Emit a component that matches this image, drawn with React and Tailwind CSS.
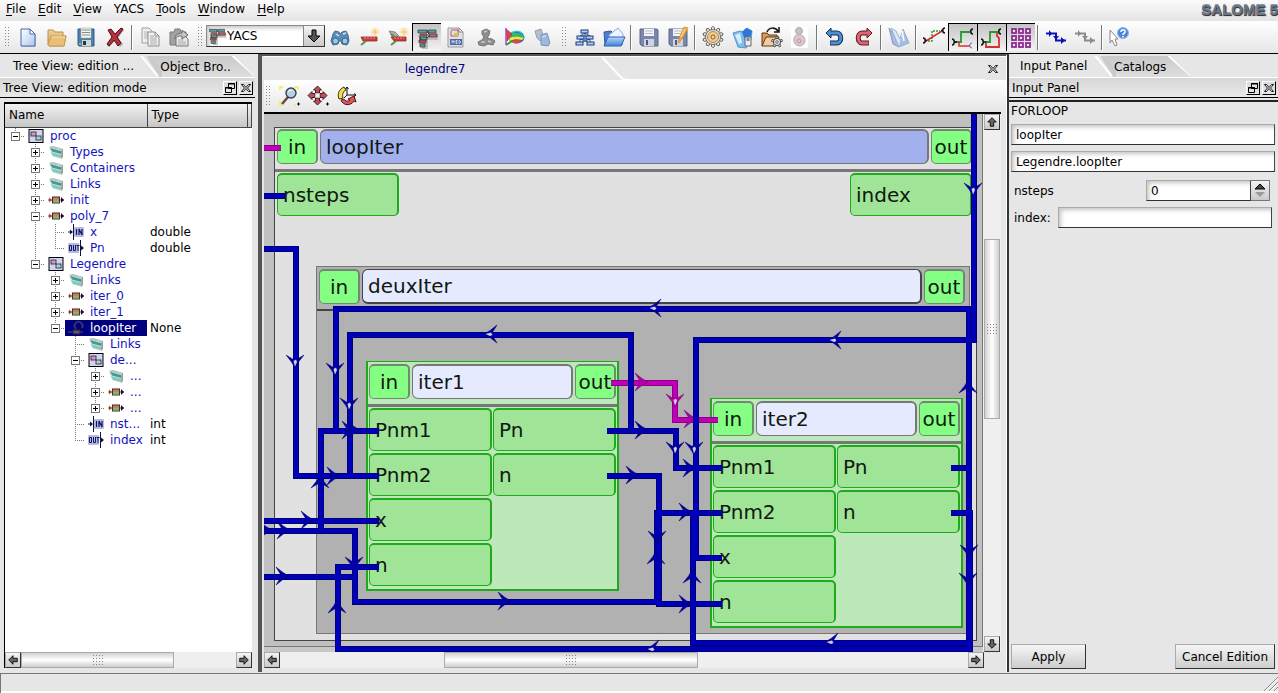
import React from "react";

/* ---------- toolbar icons ---------- */
function Ic({ children, size = "size-6" }) {
  return (
    <svg viewBox="0 0 24 24" className={`${size} shrink-0`} aria-hidden="true">
      {children}
    </svg>
  );
}

const IconNew = () => (
  <Ic>
    <path d="M6 5h9l5 5v12H6z" fill="#999" opacity=".5" />
    <path d="M5 4h9l5 5v12H5z" fill="url(#gPage)" stroke="#4a68a8" />
    <path d="M14 4v5h5z" fill="#fff" stroke="#4a68a8" />
  </Ic>
);
const IconFolder = () => (
  <Ic>
    <path d="M3 20V5h5l2 2h8v4h3l-2 10H4z" fill="url(#gFolder)" stroke="#b98d4a" />
    <path d="M3 20l3-9h15l-2 10H4z" fill="#e9bf78" stroke="#c79a55" />
    <path d="M7 12h13" stroke="#fbe3b4" />
  </Ic>
);
const IconSave = () => (
  <Ic>
    <path d="M4 4h16v17H5l-1-1z" fill="#4f7fae" stroke="#2f5a86" />
    <path d="M7 3h10v10H7z" fill="#f6f6ee" stroke="#9ab" strokeWidth=".6" />
    <path d="M8 5h8M8 7.500h8M8 10h8" stroke="#888" />
    <path d="M8 15h9v6H8z" fill="#cfd8d0" />
    <path d="M9 16h3v4H9z" fill="#1f3a30" />
    <path d="M5 18h2v2H5z" fill="#7ad14c" />
  </Ic>
);
const IconDelete = () => (
  <Ic>
    <path d="M6 7l2-2 5 5 6-7 2 2-6 8 5 6-3 3-5-6-6 6-2-2 6-7z" fill="#555" opacity=".5" />
    <path d="M5 5l3-1 4 5 6-6 2 1-6 8 4 6-3 3-4-6-5 6-2-2 5-7z" fill="#b3323d" stroke="#5a1018" />
  </Ic>
);
const IconCopy = () => (
  <Ic>
    <path d="M4 3h7l3 3v12H4z" fill="#eee" stroke="#a0a0a0" />
    <path d="M6 7h5M6 9h5M6 11h5M6 13h5" stroke="#b5b5b5" />
    <path d="M10 7h7l4 4v10H10z" fill="#f2f2f2" stroke="#8c8c8c" />
    <path d="M17 7v4h4" fill="none" stroke="#8c8c8c" />
    <path d="M12 11h4M12 13h7M12 15h7M12 17h7M12 19h7" stroke="#aaa" />
  </Ic>
);
const IconPaste = () => (
  <Ic>
    <path d="M3 7h4l1-3h5l1 3h5v13H3z" fill="#a2a2a2" stroke="#7c7c7c" />
    <path d="M9 10h8l4 4v7H9z" fill="#e8e8e8" stroke="#777" />
    <path d="M11 15h5M11 17h8M11 19h8" stroke="#aaa" />
    <path d="M8 14c0-4 3-6 7-6V5l6 5-6 4v-3c-3 0-5 0-7 3z" fill="#c4c4c4" stroke="#6c6c6c" />
  </Ic>
);
const IconYacs = ({ size }) => (
  <Ic size={size}>
    <path d="M7 9h6v14H7zM9 8h14v6H13z" fill="#b4b4b4" opacity=".8" />
    <g stroke="#4a3a3a" strokeWidth=".8">
      <path d="M3 4h9v3H3zM5 11h7v3H5z" fill="#4fa3ae" />
      <path d="M13 4h8v3h-8z" fill="#4f9fb0" />
      <path d="M5 8h7v2H5zM14 8h8v3h-8z" fill="#c9606a" />
      <path d="M4 14h7v3H4z" fill="#c0494c" />
      <path d="M5 18h5v3H5z" fill="#4a9" />
    </g>
    <path d="M12 5l2 3M11 12l4-2M4 10l2 4" stroke="#222" strokeWidth=".8" />
  </Ic>
);
const IconBinoc = () => (
  <Ic>
    <path d="M5 9l2-3 4 1 1 2 2-2 4-1 2 4 1 6-2 4-5-1-1-3h-2l-1 3-5 1-2-4z" fill="#5b8cb5" stroke="#4a6d8e" />
    <ellipse cx="7.500" cy="16" rx="3" ry="3" fill="#8fd0ee" stroke="#3e6184" />
    <ellipse cx="17" cy="16" rx="3" ry="3" fill="#8fd0ee" stroke="#3e6184" />
    <path d="M8 9l3 2M15 9l3-1" stroke="#cfe6f5" strokeWidth="1.500" />
  </Ic>
);
const Spark = () => (
  <>
    <circle cx="18" cy="7" r="4.500" fill="#ffe6b8" opacity=".7" />
    <path d="M18 4v6M15 7h6" stroke="#f2c060" />
  </>
);
const IconRobot = () => (
  <Ic>
    <Spark />
    <path d="M4 12h16v4H6z" fill="#cf3a3a" stroke="#8f2a2a" strokeWidth=".8" />
    <path d="M9 16l-5 4" stroke="#5c8f4e" strokeWidth="2" />
    <path d="M7 13h11" stroke="#ee8a80" strokeDasharray="2 1" />
  </Ic>
);
const IconRobot2 = () => (
  <Ic>
    <Spark />
    <path d="M3 6l6 1 4 4-6 2z" fill="#b0b0a4" stroke="#777" strokeWidth=".8" />
    <path d="M5 12h15v4H8z" fill="#cf3a3a" stroke="#8f2a2a" strokeWidth=".8" />
    <path d="M10 16l-5 4M5 9l4 3" stroke="#5c8f4e" strokeWidth="2" />
    <path d="M8 13h10" stroke="#ee8a80" strokeDasharray="2 1" />
  </Ic>
);
const IconMed = () => (
  <Ic>
    <path d="M4 3h11l4 4v15H4z" fill="#dfe1e6" stroke="#9a9aa2" />
    <path d="M15 3v4h4z" fill="#fff" stroke="#8a8a92" />
    <path d="M7 6v5h7V5H7" fill="none" stroke="#b33" strokeWidth=".8" />
    <path d="M10 8h4v3h-4z" fill="#d9c04a" />
    <path d="M6 14h12v6H6z" fill="#4a66a4" />
    <path d="M8 18.500v-3l1 1.500 1-1.500v3M13.500 15.500H12v3h1.500M12 17h1.500M15 15.500v3c2 0 2-3 0-3" fill="none" stroke="#fff" strokeWidth=".7" />
  </Ic>
);
const IconGrey = () => (
  <Ic>
    <path d="M9 6l4-2 4 2-1 4-2 3 5 1 3 2-2 4-5-1-4 2-5-1-1-3 4-2 2-3-2-3z" fill="#8e8e8e" stroke="#757575" />
    <path d="M11 7l3-1M8 17h4M15 16l3 1" stroke="#c9c9c9" strokeWidth="1.500" />
  </Ic>
);
const IconRainbow = () => (
  <Ic>
    <ellipse cx="14.500" cy="12.500" rx="8" ry="6" fill="#2b66d8" />
    <path d="M6 10c4-3 11-3 16 1v2c-5-2-10-2-16 1z" fill="#2fbf5a" />
    <path d="M7 13c5-2 10-2 15 0l-2 2c-5-1-8-1-12 1z" fill="#ffe436" />
    <path d="M9 16c4-1.500 8-1.500 11 0-3 3-8 3.500-11 0z" fill="#e8452e" />
    <path d="M8 9c3-3 9-4 13 0" fill="none" stroke="#2ac4e6" strokeWidth="1.500" />
    <path d="M4 4l6 5-5 7z" fill="#e34040" stroke="#a22" strokeWidth=".6" />
    <path d="M4 3v17" stroke="#a04cd0" strokeWidth="1.500" />
    <path d="M4 20l6-4" stroke="#2a9a3a" strokeWidth="1.800" />
  </Ic>
);
const IconPages = () => (
  <Ic>
    <path d="M4 6l6-2 3 8-4 4-3-3z" fill="#b5bfcc" stroke="#94a1b1" />
    <path d="M10 10l6-2 3 10-2 3-7-1z" fill="#9cb8dd" stroke="#7793bd" />
    <path d="M11 12l4-1" stroke="#dceafa" />
  </Ic>
);
const IconTreeNew = () => (
  <Ic>
    <path d="M12 8v3M7 14h10M7 11h10M7 14v4M17 14v4M12 8l-5 3M12 8l5 3M7 14l10 4M17 14L7 18" fill="none" stroke="#123a78" strokeWidth=".8" />
    {[[8, 5], [4, 11], [13, 11], [3, 17], [14, 17]].map(([x, y]) => (
      <rect key={`${x}-${y}`} x={x} y={y} width="7" height="3" fill="#b8cef5" stroke="#173a86" />
    ))}
  </Ic>
);
const IconOpenBlue = () => (
  <Ic>
    <path d="M2 7l7-1 2 2h6l3 2v10H3z" fill="#4d80cc" stroke="#2d5aa0" />
    <path d="M7 10l9-7 5 6v8L8 18z" fill="#eef4ff" stroke="#8ea8d4" />
    <path d="M2 21l4-9h17l-4 9z" fill="url(#gBlue)" stroke="#2b63b8" />
  </Ic>
);
const Floppy = () => (
  <>
    <path d="M3 4h17l1 1v16H5l-2-2z" fill="#7a87a8" stroke="#59668a" />
    <path d="M7 4h10v7H7z" fill="#f3f5fb" />
    <path d="M8 6h8M8 8.500h8" stroke="#bbc" />
    <path d="M7 14h10v7H7z" fill="#ccd4e6" />
    <path d="M9 15h2v5H9z" fill="#4e5a80" />
  </>
);
const IconFloppy = () => <Ic><Floppy /></Ic>;
const IconFloppyEdit = () => (
  <Ic>
    <Floppy />
    <path d="M12 17l2-6 4-9 4 1-5 9-4 6z" fill="#f5ae3a" stroke="#d09030" strokeWidth=".8" />
    <path d="M15 12l4-8" stroke="#ffe08a" />
  </Ic>
);
const teeth = [0, 36, 72, 108, 144, 180, 216, 252, 288, 324];
const IconGear = () => (
  <Ic>
    {teeth.map((a) => (
      <path key={a} transform={`rotate(${a} 12 12)`} d="M10.500 7V2.500L12 1.500l1.500 1V7z" fill="#f3ecdf" stroke="#555" strokeWidth=".9" />
    ))}
    <circle cx="12" cy="12" r="7.500" fill="#efe6d6" stroke="#666" strokeWidth=".9" />
    <circle cx="12" cy="12" r="5.500" fill="#f2c887" stroke="#a58250" strokeWidth=".9" />
    <circle cx="12" cy="12" r="2" fill="#f7dcae" stroke="#7a6038" />
  </Ic>
);
const IconBlueDoc = () => (
  <Ic>
    <path d="M3 8l7-2 4 1 3-4 5 3-1 8-5 9-8-1z" fill="#7fbdec" stroke="#5a95cc" />
    <path d="M12 7l4-4 6 3-2 7-5 2z" fill="#2f74d8" />
    <path d="M5 10l5-2 2 10-3 1z" fill="#d8edfb" />
    <path d="M15 12h6v9h-6z" fill="#e8edf0" stroke="#667" />
    <path d="M16.500 13h3v3h-3z" fill="#7a88a0" />
  </Ic>
);
const IconFolderGear = () => (
  <Ic>
    <path d="M3 21V8h5l2 2h8v3" fill="#e09a55" stroke="#5a3a18" />
    <path d="M3 21l4-9h13l-3 9z" fill="#f2cda0" stroke="#5a3a18" />
    <path d="M8 7c2-5 8-5 11-1M20 2v5h-5" fill="none" stroke="#111" strokeWidth="1.500" />
    {teeth.filter((a) => a % 72 === 0).map((a) => (
      <path key={a} transform={`rotate(${a} 18 17)`} d="M17 14v-2.500h2V14z" fill="#eee" stroke="#444" strokeWidth=".8" />
    ))}
    <circle cx="18" cy="17" r="3.600" fill="#e5e5e5" stroke="#444" />
    <circle cx="18" cy="17" r="1.300" fill="#fff" stroke="#444" strokeWidth=".8" />
  </Ic>
);
const IconFaded = () => (
  <Ic>
    <path d="M3 2h17v21H3z" fill="#fff" />
    <circle cx="11" cy="6" r="3.500" fill="#cdbfc4" stroke="#b5a8ad" />
    <path d="M7 11c3-2 6-2 9 1 2 4 1 8-4 9-5 0-8-5-5-10z" fill="#dbc8ce" stroke="#bbaab1" />
    <circle cx="11" cy="16" r="2" fill="none" stroke="#b99aa4" />
  </Ic>
);
const IconUndo = () => (
  <Ic>
    <path d="M7 8h7c5 0 5 10 0 10H7" fill="none" stroke="#1c2e50" strokeWidth="5" />
    <path d="M3 8l5-5v10z" fill="#4a90d8" stroke="#1c2e50" />
    <path d="M6 8h8c5 0 5 10 0 10H7.500" fill="none" stroke="#4a90d8" strokeWidth="3" />
  </Ic>
);
const IconRedo = () => (
  <Ic>
    <path d="M16 8h-6c-5 0-5 10 0 10h7" fill="none" stroke="#5a1c22" strokeWidth="5" />
    <path d="M20 8l-5-5v10z" fill="#dd6470" stroke="#5a1c22" />
    <path d="M17 8h-7c-5 0-5 10 0 10h6.500" fill="none" stroke="#dd6470" strokeWidth="3" />
  </Ic>
);
const IconBook = () => (
  <Ic>
    <path d="M2 3l9 13 1 6-6-3z" fill="#a9bde0" stroke="#7f96c2" />
    <path d="M4 3l5 3 4 8 3-10 6 14-10 4z" fill="#dde7f7" stroke="#9ab0d4" />
    <path d="M12 22l10-4-5-12-4 10z" fill="#8fabd8" opacity=".7" />
    <path d="M15 6l2 10" stroke="#fff" strokeWidth="1.500" />
  </Ic>
);
const IconStraight = () => (
  <Ic>
    <path d="M6 16h4V6h8" fill="none" stroke="#2a9a2a" strokeDasharray="2 1" strokeWidth="1.500" />
    <path d="M4 16L20 6" stroke="#d83030" strokeWidth="1.600" />
    <path d="M1 13c3 0 3 5 0 5M23 3c-3 0-3 5 0 5M3 15.500h2M19 5.500h2" fill="none" stroke="#111" strokeWidth="1.500" />
  </Ic>
);
const IconRoute = () => (
  <Ic>
    <path d="M4 16h6V6h9" fill="none" stroke="#2a9a2a" strokeWidth="1.800" />
    <path d="M8 16v4h11" fill="none" stroke="#d83030" strokeWidth="1.500" />
    <path d="M1 13c3 0 3 6 0 6M22 3c-3 0-3 5 0 5M3 16h3" fill="none" stroke="#111" strokeWidth="1.500" />
    <path d="M21 17c-3 0-3 5 0 5" fill="none" stroke="#55a" />
  </Ic>
);
const IconRouteBox = () => (
  <Ic>
    <path d="M5 16h5V6h8" fill="none" stroke="#2a9a2a" strokeWidth="1.800" />
    <path d="M6 17v4h13V12l-2-2V7" fill="none" stroke="#d83030" strokeWidth="1.800" />
    <path d="M1 13c3 0 3 6 0 6M21 3c-3 0-3 5 0 5M3 16h3" fill="none" stroke="#111" strokeWidth="1.500" />
  </Ic>
);
const IconGrid = () => (
  <Ic>
    {[3, 10, 17].map((y) => [3, 10, 17].map((x) => (
      <rect key={`${x}-${y}`} x={x} y={y} width="4" height="4" fill="#f4e4f4" stroke="#8f2d92" strokeWidth="1.800" />
    )))}
  </Ic>
);
const Flow = ({ c }) => (
  <Ic>
    <path d="M2 8.500h10v7h10" fill="none" stroke={c} strokeWidth="2" />
    <path d="M5 5l3 3.500L5 12zM9 11h6l-3 4zM17 12l4 3.500L17 19z" fill={c} />
  </Ic>
);
const IconWhat = () => (
  <Ic>
    <path d="M2 5l8 9H7l2 6-2 1-3-6-2 3z" fill="#fff" stroke="#888" />
    <circle cx="15" cy="8" r="5.500" fill="#4a86dc" stroke="#8fb4ee" />
    <path d="M13 7c0-3 4.500-3 4 0 0 1.500-2 1-2 3M15 11v1.500" fill="none" stroke="#fff" strokeWidth="1.500" />
  </Ic>
);
const IconZoom = () => (
  <Ic>
    <path d="M3 6V3h3M17 3h4v3M3 17v4h3M17 21h2" fill="none" stroke="#f2ee4a" strokeWidth="1.500" />
    <path d="M11 13l-6 7" stroke="#6a4a3a" strokeWidth="2.500" />
    <circle cx="14" cy="9" r="5" fill="#b9d0e2" stroke="#33414e" strokeWidth="1.400" />
    <path d="M11 8c1-2 3-2 4-2" fill="none" stroke="#fff" />
    <path d="M20 20h3M21.500 18.500v3" stroke="#000" />
  </Ic>
);
const IconPan = () => (
  <Ic>
    <g fill="#b8525c" stroke="#3a1014" strokeWidth=".9">
      <path d="M11.500 2l4 4h-2v3h-4V6h-2z" />
      <path d="M11.500 21l4-4h-2v-3h-4v3h-2z" />
      <path d="M2 11.500l4-4v2h3v4H6v2z" />
      <path d="M21 11.500l-4-4v2h-3v4h3v2z" />
    </g>
    <path d="M9.500 9.500h4v4h-4z" fill="#e9eef2" />
    <path d="M20 20h3M21.500 18.500v3" stroke="#000" />
  </Ic>
);
const IconRotate = () => (
  <Ic>
    <path d="M4 15c-2-5 0-10 5-12l2 3c-3 1-4 5-3 8z" fill="#efe04a" stroke="#3a3410" />
    <path d="M6 16c2 6 10 6 13 1l2 1-2-6-6 3 2 1c-2 2-5 1-6-1z" fill="#e2525c" stroke="#4a1418" />
    <path d="M12 11V3M10.500 5L12 3l1.500 2M12 11h9M19 9.500l2 1.500-2 1.500M12 11l-3 3" fill="none" stroke="#111" />
  </Ic>
);

/* ---------- shared controls ---------- */
const Grip = () => (
  <span className="mx-[4px] h-[22px] w-[5px] shrink-0 bg-[radial-gradient(#8a8a8a_1px,transparent_1px)] bg-[length:3px_3px]" />
);
const Sep = () => <span className="mx-[2px] h-[25px] w-[2px] shrink-0 border-l border-[#777] bg-white" />;
function Tool({ label, pressed, children }) {
  return (
    <button
      type="button"
      aria-label={label}
      className={`flex h-7 w-[29px] shrink-0 items-center justify-center ${
        pressed ? "border-t border-l border-black bg-gradient-to-b from-[#c4c4c4] to-[#f4f4f4]" : ""
      }`}
    >
      {children}
    </button>
  );
}

function Arrow({ dir }) {
  const paths = {
    up: "M7 2l5 5H9v5H5V7H2z",
    down: "M7 12l5-5H9V2H5v5H2z",
    left: "M2 7l5-5v3h5v4H7v3z",
    right: "M12 7L7 2v3H2v4h5v3z",
  };
  return (
    <svg viewBox="0 0 14 14" className="size-[12px]" aria-hidden="true">
      <path d={paths[dir]} fill="#666" stroke="#000" />
    </svg>
  );
}
function ScrollButton({ dir }) {
  return (
    <button
      type="button"
      aria-label={`Scroll ${dir}`}
      className="flex size-4 shrink-0 items-center justify-center border border-t-[#aaa] border-r-[#333] border-b-[#333] border-l-[#aaa] bg-gradient-to-b from-[#f4f4f4] to-[#c9c9c9]"
    >
      <Arrow dir={dir} />
    </button>
  );
}
const Dots = () => (
  <span className="size-[12px] bg-[radial-gradient(#888_1px,transparent_1px)] bg-[length:3px_3px]" />
);
function HScroll({ before, thumb, after }) {
  return (
    <div className="flex h-4 min-w-0 bg-[#efefef]">
      <ScrollButton dir="left" />
      <div className="flex min-w-0 flex-1">
        <span className={before} />
        <div className={`flex items-center justify-center border border-[#aaa] bg-gradient-to-b from-[#d2d2d2] via-white to-[#cfcfcf] ${thumb}`}>
          <Dots />
        </div>
        <span className={after} />
      </div>
      <ScrollButton dir="right" />
    </div>
  );
}

function DockTabs({ first, second, firstWidth, secondWidth }) {
  return (
    <div className="relative flex h-[22px] items-start border-b border-white">
      <button type="button" className={`h-5 text-left ${firstWidth}`}>{first}</button>
      <svg viewBox="0 0 26 22" className="-ml-2 h-[21px] w-[26px] shrink-0" aria-hidden="true">
        <path d="M9 0h17v22H23z" fill="#cbcbcb" />
        <path d="M4 0L21 21" stroke="#fff" strokeWidth="2" />
      </svg>
      <button
        type="button"
        className={`-ml-[12px] h-[21px] bg-gradient-to-b from-[#c9c9c9] to-[#dedede] pl-[9px] text-left whitespace-nowrap [clip-path:polygon(2px_0,calc(100%-24px)_0,100%_100%,14px_100%)] ${secondWidth}`}
      >
        {second}
      </button>
      <svg viewBox="0 0 26 22" className="-ml-[26px] h-[21px] w-[26px] shrink-0" aria-hidden="true">
        <path d="M3 0L25 21" stroke="#fff" strokeWidth="2" />
      </svg>
    </div>
  );
}
const CloseGlyph = () => (
  <svg viewBox="0 0 12 12" className="size-3" aria-hidden="true">
    <path d="M1.500 2.500h2l2.500 3 2.500-3h2L7.500 6l3 3.500h-2L6 6.500 3.500 9.500h-2L4.500 6z" fill="#fff" stroke="#000" strokeWidth=".9" />
  </svg>
);
function DockTitle({ children }) {
  const box = "flex size-[14px] items-center justify-center border border-t-white border-r-black border-b-black border-l-white";
  return (
    <div className="flex h-5 items-center gap-[2px] border-b border-black bg-gradient-to-b from-[#d6d6d6] to-[#e9e9e9] pr-[2px] pl-[3px]">
      <span className="flex-1">{children}</span>
      <button type="button" aria-label={`Detach ${children}`} className={box}>
        <svg viewBox="0 0 12 12" className="size-3" aria-hidden="true">
          <path d="M4.500 1.500h6v5h-6zM1.500 5.500h6v5h-6z" fill="#e4e4e4" stroke="#000" />
          <path d="M4 2h7M1 6h7" stroke="#000" />
        </svg>
      </button>
      <button type="button" aria-label={`Close ${children}`} className={box}><CloseGlyph /></button>
    </div>
  );
}

/* ---------- tree ---------- */
const treeIcons = {
  block: (
    <>
      <rect x="1" y="1.500" width="14" height="13" fill="#d2d2f2" stroke="#000" />
      <rect x="3" y="4" width="5" height="4" fill="#d898a0" stroke="#336" strokeWidth=".9" />
      <rect x="8" y="8" width="5" height="4" fill="#a5dca0" stroke="#336" strokeWidth=".9" />
    </>
  ),
  folder: (
    <>
      <path d="M1 3l4-1 10 3v8l-2 2L4 12z" fill="#dfe3e2" />
      <path d="M1 3l4-1 10 3-1 1L3 4z" fill="#b9c0be" />
      <path d="M2 4l11 3v3L4 7.500z" fill="#37a092" />
      <path d="M3 8l10 3v3L5 12z" fill="#84c8bd" />
      <path d="M14 5h1v8l-2 2V7z" fill="#9aa5a3" />
    </>
  ),
  node: (
    <>
      <path d="M0 8h4M12 8h4" stroke="#833" />
      <path d="M1 5.500L4 8l-3 2.500z" fill="#a8483a" />
      <path d="M13 5l3 3-3 3z" fill="#113" />
      <rect x="4.500" y="5" width="7" height="6" fill="#d87a5a" stroke="#333" />
      <path d="M5 8h6v2.500H5z" fill="#8ab06a" />
    </>
  ),
  input: (
    <>
      <path d="M0 8h4" stroke="#113" />
      <path d="M2 5.500L5 8l-3 2.500zM5 0h1v16H5z" fill="#114" />
      <rect x="6" y="3" width="10" height="10" rx="1" fill="#b4bae6" />
      <path d="M8.500 5v6M11 11V5l3 6V5" fill="none" stroke="#14145a" strokeWidth="1.200" />
    </>
  ),
  output: (
    <>
      <rect x="0" y="3" width="11" height="10" rx="1" fill="#b4bae6" />
      <path d="M1.500 5.500v5h2v-5zM5.500 5v5.500h2V5M8.500 5.500h3M10 5.500V11" fill="none" stroke="#14145a" />
      <path d="M12 0h1v16h-1zM13 5.500L16 8l-3 2.500z" fill="#114" />
    </>
  ),
  loop: (
    <>
      <path d="M8 9a4 4 0 1 1 6-1" fill="none" stroke="#3a3f68" strokeWidth="1.600" />
      <path d="M0 12h5M11 12h4" stroke="#4a527a" />
      <rect x="5" y="10" width="7" height="4" fill="#6a4a70" stroke="#223" />
    </>
  ),
};

/* guides: one character per ancestor level, "|" where its line carries on */
const rows = [
  { g: "", sign: "-", end: true, icon: "block", name: "proc" },
  { g: " ", sign: "+", icon: "folder", name: "Types" },
  { g: " ", sign: "+", icon: "folder", name: "Containers" },
  { g: " ", sign: "+", icon: "folder", name: "Links" },
  { g: " ", sign: "+", icon: "node", name: "init" },
  { g: " ", sign: "-", icon: "node", name: "poly_7" },
  { g: " |", icon: "input", name: "x", type: "double" },
  { g: " |", end: true, icon: "output", name: "Pn", type: "double" },
  { g: " ", sign: "-", end: true, icon: "block", name: "Legendre" },
  { g: "  ", sign: "+", icon: "folder", name: "Links" },
  { g: "  ", sign: "+", icon: "node", name: "iter_0" },
  { g: "  ", sign: "+", icon: "node", name: "iter_1" },
  { g: "  ", sign: "-", end: true, icon: "loop", name: "loopIter", type: "None", selected: true },
  { g: "   ", icon: "folder", name: "Links" },
  { g: "   ", sign: "-", icon: "block", name: "de..." },
  { g: "   |", sign: "+", icon: "folder", name: "..." },
  { g: "   |", sign: "+", icon: "node", name: "..." },
  { g: "   |", sign: "+", end: true, icon: "node", name: "..." },
  { g: "   ", icon: "input", name: "nst...", type: "int" },
  { g: "   ", end: true, icon: "output", name: "index", type: "int" },
];

function Guide({ line, branch, end, sign }) {
  return (
    <svg viewBox="0 0 20 16" className="h-4 w-5 shrink-0" aria-hidden="true">
      {line && <path d="M10.500 0v16" stroke="#777" strokeDasharray="1 1" />}
      {branch && <path d={`M10.500 0v${end ? 8 : 16}M10 8.500h10`} fill="none" stroke="#777" strokeDasharray="1 1" />}
      {sign && (
        <>
          <rect x="6.500" y="4.500" width="8" height="8" fill="#fff" stroke="#777" />
          <path d={sign === "+" ? "M8 8.500h5M10.500 6v5" : "M8 8.500h5"} stroke="#000" />
        </>
      )}
    </svg>
  );
}

function TreeRow({ row }) {
  /* the bar left of a child stands under its parent's icon, so the last
     guide column of a nested row belongs to the parent level */
  const cells = [...row.g].map((c, i) => ({ line: c === "|" && i < row.g.length - 1 }));
  const parentLine = row.g.endsWith("|") && row.g.length > 1;
  return (
    <tr className="h-4">
      <td className="p-0">
        <div className="flex h-4 items-center overflow-hidden">
          {cells.map((c, i) => <Guide key={i} line={c.line || (parentLine && i === cells.length - 1)} />)}
          <Guide branch sign={row.sign} end={row.end} />
          <div className={`flex h-4 min-w-0 flex-1 items-center gap-[6px] pl-[3px] whitespace-nowrap ${row.selected ? "bg-[#00007f] text-white" : "text-[#1414c0]"}`}>
            <svg viewBox="0 0 16 16" className="size-4 shrink-0" aria-hidden="true">{treeIcons[row.icon]}</svg>
            <span>{row.name}</span>
          </div>
        </div>
      </td>
      <td className="p-0 pl-[3px]">{row.type}</td>
      <td className="p-0" />
    </tr>
  );
}

/* ---------- diagram ---------- */
const gate = "flex h-[35px] w-[41px] shrink-0 items-center justify-center rounded-[5px] border border-t-2 border-r-2 border-[#6f8a6f] bg-[#84ff84]";
function NodeHead({ title, tone, rule }) {
  return (
    <div className={`flex gap-[2px] pb-[5px] ${rule}`}>
      <div className={gate}>in</div>
      <div className={`flex h-[35px] min-w-0 flex-1 items-center rounded-[6px] border px-[5px] ${tone}`}>{title}</div>
      <div className={gate}>out</div>
    </div>
  );
}
const port = "flex h-[43px] items-center rounded-[5px] border border-t-2 border-r-2 border-[#1faa1b] bg-[#9fe497] px-[5px]";
function CalcNode({ title, place }) {
  return (
    <div className={`absolute w-[253px] border-2 border-t border-[#1faa1b] bg-[#bde8b9] pb-[3px] ${place}`}>
      <NodeHead title={title} tone="border-t-2 border-r-2 border-[#777] bg-[#e5eaff]" rule="border-b-[3px] border-[#777] px-[1px] pt-[2px]" />
      <div className="grid grid-cols-2 gap-x-px gap-y-[2px] px-[1px] pt-[1px]">
        <div className={port}>Pnm1</div>
        <div className={port}>Pn</div>
        <div className={port}>Pnm2</div>
        <div className={port}>n</div>
        <div className={`${port} col-start-1`}>x</div>
        <div className={`${port} col-start-1`}>n</div>
      </div>
    </div>
  );
}

const dataLinks = [
  "M0 82H21", "M0 135H32V362H115", "M708 195H72V317H115", "M367 317V221H86V362",
  "M343 317H412V354H458", "M343 362H395V490H458", "M0 417H91V488H393V399H458",
  "M0 407H115", "M57 417V317H115", "M0 463H91", "M687 399H706V535H74V453H115",
  "M458 444H432V226H710V0", "M705 354V529H429V399", "M687 354H705V195",
];
const controlLinks = ["M0 34H17", "M347 269H411V306H454"];
const heads = [
  ["d", 31, 254], ["d", 71, 262], ["d", 85, 297], ["d", 411, 341], ["d", 430, 341], ["d", 709, 82],
  ["D", 705, 444], ["D", 704, 472], ["D", 393, 430], ["D", 90, 456],
  ["u", 56, 361], ["u", 73, 486], ["u", 704, 266], ["u", 428, 456], ["u", 392, 437],
  ["r", 50, 406], ["r", 26, 416], ["r", 8, 416], ["r", 25, 462], ["r", 247, 487], ["r", 76, 362], ["r", 91, 316],
  ["r", 96, 316], ["r", 384, 316], ["r", 375, 361], ["r", 428, 398], ["r", 428, 490], ["r", 432, 354],
  ["l", 220, 220], ["l", 384, 194], ["l", 564, 226], ["l", 561, 528], ["l", 382, 535],
];
const controlHeads = [["r", 384, 268], ["d", 411, 293], ["r", 433, 305]];
const turn = { l: 0, u: 90, r: 180, d: 270, D: 270 };
function Head({ h, fill, edge }) {
  const [dir, x, y] = h;
  return (
    <g transform={`translate(${x} ${y}) rotate(${turn[dir]})`}>
      <path d="M0 0L6 -3.500L13 -9L9 -2.500V2.500L13 9L6 3.500Z" fill={fill} stroke={edge} strokeWidth=".5" />
      {(dir === "l" || dir === "d") && <path d="M1.500 0L7 -1.500L8.500 1L6 2Z" fill="#d0d0e4" />}
    </g>
  );
}

function Diagram() {
  return (
    <div className="relative min-h-0 min-w-0 flex-1 overflow-hidden bg-[#c8c8c8] text-[20px] leading-6 text-[#101810]">
      <div className="absolute -top-4 -left-4 h-[549px] w-[735px] border border-[#777] bg-[#c0c0c0]" />
      <div className="absolute top-[13px] left-[10px] h-[514px] w-[703px] border border-[#444] bg-[#e1e1e1]">
        <div className="w-[699px]">
          <NodeHead title="loopIter" tone="border-t-2 border-r-2 border-[#777] bg-[#a2b1ee]" rule="px-[2px] pt-[1px]" />
        </div>
        <div className="h-[3px] bg-[#777]" />
        <div className="flex w-[699px] justify-between px-[2px] pt-[1px]">
          <div className={`${port} w-[122px]`}>nsteps</div>
          <div className={`${port} w-[122px]`}>index</div>
        </div>
      </div>
      <div className="absolute top-[152px] left-[52px] h-[368px] w-[654px] border border-[#777] bg-[#b1b1b1]">
        <div className="w-[650px]">
          <NodeHead title="deuxIter" tone="border-r-2 border-b-2 border-[#444] bg-[#e5eaff]" rule="px-[2px] pt-[2px]" />
        </div>
        <div className="h-[2px] bg-[#444]" />
      </div>
      <CalcNode title="iter1" place="top-[247px] left-[102px]" />
      <CalcNode title="iter2" place="top-[284px] left-[446px]" />
      <svg width="720" height="540" className="absolute top-0 left-0" aria-hidden="true" fill="none">
        {controlLinks.map((d) => <path key={d} d={d} stroke="#8a0088" strokeWidth="6" />)}
        {controlLinks.map((d) => <path key={d} d={d} stroke="#c000b8" strokeWidth="4" />)}
        {controlHeads.map((h) => <Head key={h.join()} h={h} fill="#b000aa" edge="#700070" />)}
        {dataLinks.map((d) => <path key={d} d={d} stroke="#00007c" strokeWidth="6" />)}
        {dataLinks.map((d) => <path key={d} d={d} stroke="#0000b8" strokeWidth="4" />)}
        {heads.map((h) => <Head key={h.join()} h={h} fill="#0000a8" edge="#00006c" />)}
      </svg>
    </div>
  );
}

/* ---------- page ---------- */
const menus = ["File", "Edit", "View", "YACS", "Tools", "Window", "Help"];
const field = "h-[21px] border border-t-[#aaa] border-r-[#444] border-b-[#333] border-l-[#aaa] bg-white px-[4px] shadow-[inset_3px_3px_4px_-1px_#c4c4c4] outline-none";
const pushButton = "h-[25px] border border-t-[#aaa] border-r-[#333] border-b-[#333] border-l-[#aaa] bg-gradient-to-b from-[#f6f6f6] to-[#cdcdcd]";
const th = "h-[23px] border-r border-b border-[#444] bg-gradient-to-b from-[#f2f2f2] to-[#c6c6c6] p-0 pl-[4px] text-left font-normal";

export default function App() {
  return (
    <div className="flex h-screen flex-col overflow-hidden bg-[#e6e6e6] font-['DejaVu_Sans',sans-serif] text-[12px] leading-4 text-black">
      <svg className="absolute size-0" aria-hidden="true">
        <defs>
          <linearGradient id="gPage" x1="0" y1="0" x2="1" y2="1">
            <stop offset="0" stopColor="#fff" /><stop offset="1" stopColor="#a8c6f2" />
          </linearGradient>
          <linearGradient id="gFolder" x1="0" y1="0" x2="0" y2="1">
            <stop offset="0" stopColor="#f0cf98" /><stop offset="1" stopColor="#d9a657" />
          </linearGradient>
          <linearGradient id="gBlue" x1="0" y1="0" x2="0" y2="1">
            <stop offset="0" stopColor="#b9d6f8" /><stop offset="1" stopColor="#3f82dc" />
          </linearGradient>
        </defs>
      </svg>

      <header className="flex h-[21px] shrink-0 items-start justify-between bg-gradient-to-b from-[#fbfbfb] to-[#e4e4e4]">
        <nav className="flex pt-[1px]">
          {menus.map((m) => (
            <button key={m} type="button" className="px-[6px]">
              {m === "YACS" ? m : <><span className="underline underline-offset-2">{m[0]}</span>{m.slice(1)}</>}
            </button>
          ))}
        </nav>
        <span className="font-['Liberation_Sans',sans-serif] text-[15px] leading-5 font-bold whitespace-nowrap text-[#66788c] [text-shadow:1px_1px_1px_#333,0_-1px_0_#8a99aa,0_1px_0_#556]">SALOME 5</span>
      </header>

      <div className="flex h-8 shrink-0 items-center bg-gradient-to-b from-white to-[#e6e6e6]">
        <Grip />
        <Tool label="New"><IconNew /></Tool>
        <Tool label="Open"><IconFolder /></Tool>
        <Tool label="Save"><IconSave /></Tool>
        <Tool label="Close"><IconDelete /></Tool>
        <Sep />
        <Tool label="Copy"><IconCopy /></Tool>
        <Tool label="Paste"><IconPaste /></Tool>
        <Grip />
        <label className="mb-[3px] flex h-[22px] w-[119px] shrink-0 items-center border border-t-[#888] border-r-[#333] border-b-[#333] border-l-[#888] bg-white shadow-[inset_3px_3px_4px_-1px_#c4c4c4]">
          <IconYacs size="size-5" />
          <select aria-label="Module" className="h-5 min-w-0 flex-1 appearance-none bg-transparent outline-none" defaultValue="YACS">
            <option>YACS</option>
          </select>
          <span className="flex h-5 w-[21px] items-center justify-center border-l border-[#888] bg-gradient-to-b from-[#f4f4f4] to-[#c9c9c9]">
            <svg viewBox="0 0 14 14" className="size-[14px]" aria-hidden="true"><path d="M7 13l6-6H9V1H5v6H1z" fill="#555" stroke="#000" /></svg>
          </span>
        </label>
        <Tool label="Geometry"><IconBinoc /></Tool>
        <Tool label="Light"><IconRobot /></Tool>
        <Tool label="PyLight"><IconRobot2 /></Tool>
        <Tool label="YACS" pressed><IconYacs /></Tool>
        <Tool label="MED"><IconMed /></Tool>
        <Tool label="Mesh"><IconGrey /></Tool>
        <Tool label="Post-Pro"><IconRainbow /></Tool>
        <Tool label="Components"><IconPages /></Tool>
        <Grip />
        <Tool label="New schema"><IconTreeNew /></Tool>
        <Tool label="Import schema"><IconOpenBlue /></Tool>
        <Sep />
        <Tool label="Save schema"><IconFloppy /></Tool>
        <Tool label="Save schema as"><IconFloppyEdit /></Tool>
        <Sep />
        <Tool label="Run"><IconGear /></Tool>
        <Tool label="Load run"><IconBlueDoc /></Tool>
        <Tool label="Load and run"><IconFolderGear /></Tool>
        <Tool label="Batch"><IconFaded /></Tool>
        <Sep />
        <Tool label="Undo"><IconUndo /></Tool>
        <Tool label="Redo"><IconRedo /></Tool>
        <Sep />
        <Tool label="Import catalog"><IconBook /></Tool>
        <Sep />
        <Tool label="Straight links"><IconStraight /></Tool>
        <Tool label="Compute links" pressed><IconRoute /></Tool>
        <Tool label="Separate links" pressed><IconRouteBox /></Tool>
        <Tool label="Grid" pressed><IconGrid /></Tool>
        <Sep />
        <Tool label="Rebuild links"><Flow c="#0a14b4" /></Tool>
        <Tool label="Rebuild link"><Flow c="#8c8c8c" /></Tool>
        <Sep />
        <Tool label="What's this"><IconWhat /></Tool>
      </div>

      <div className="flex min-h-0 flex-1 border-t border-black pb-[1px]">
        {/* left dock */}
        <aside className="flex w-[258px] shrink-0 flex-col pt-[2px] pr-[3px] pb-[4px]">
          <DockTabs first="Tree View: edition ..." second="Object Bro.." firstWidth="w-[147px] pl-[13px]" secondWidth="w-[105px]" />
          <DockTitle>Tree View: edition mode</DockTitle>
          <div className="mt-[4px] mr-[3px] ml-[4px] flex min-h-0 flex-1 flex-col border-t-2 border-l border-black bg-white">
            <div className="min-h-0 flex-1 overflow-hidden">
              <table className="w-full table-fixed border-collapse">
                <colgroup>
                  <col className="w-[142px]" />
                  <col className="w-[100px]" />
                  <col />
                </colgroup>
                <thead>
                  <tr>
                    <th className={th}>Name</th>
                    <th className={th}>Type</th>
                    <th className={th} aria-label="Value" />
                  </tr>
                </thead>
                <tbody>
                  {rows.map((r, i) => <TreeRow key={i} row={r} />)}
                </tbody>
              </table>
            </div>
            <HScroll before="w-0" thumb="w-[153px]" after="flex-1" />
          </div>
        </aside>

        {/* work area */}
        <main className="flex min-w-0 flex-1 flex-col border-t-2 border-r border-l-4 border-[#555] border-r-white pl-[2px]">
          <div className="flex h-[24px] shrink-0 items-center border-t border-white">
            <button type="button" className="w-[342px] text-[#00007f]">legendre7</button>
            <svg viewBox="0 0 24 24" className="-ml-1 h-6 w-6 shrink-0" aria-hidden="true">
              <path d="M0 0L21 22.500H24" fill="none" stroke="#fff" strokeWidth="2" />
            </svg>
            <span className="h-full flex-1 border-b border-white" />
            <button type="button" aria-label="Close legendre7" className="mr-[5px] px-[2px]"><CloseGlyph /></button>
          </div>
          <div className="flex h-8 shrink-0 items-center bg-gradient-to-b from-white to-[#e6e6e6]">
            <span className="-ml-[3px] flex"><Grip /></span>
            <Tool label="Fit view"><IconZoom /></Tool>
            <Tool label="Pan view"><IconPan /></Tool>
            <Tool label="Reset view"><IconRotate /></Tool>
          </div>
          <div className="mr-[5px] flex min-h-0 flex-1 border-t-2 border-black">
            <Diagram />
            <div className="flex w-[18px] shrink-0 flex-col items-center bg-[#efefef]">
              <ScrollButton dir="up" />
              <div className="flex min-h-0 w-4 flex-1 flex-col">
                <span className="h-[109px]" />
                <div className="flex h-[180px] items-center justify-center border border-[#aaa] bg-gradient-to-r from-[#d2d2d2] via-white to-[#cfcfcf]"><Dots /></div>
              </div>
              <ScrollButton dir="down" />
            </div>
          </div>
          <div className="mr-[22px] mb-[4px]">
            <HScroll before="w-[164px]" thumb="w-[254px]" after="flex-1" />
          </div>
        </main>

        {/* right dock */}
        <aside className="flex w-[271px] shrink-0 flex-col border-l-2 border-[#333] pt-[2px]">
          <DockTabs first="Input Panel" second="Catalogs" firstWidth="w-[90px] pl-[11px]" secondWidth="w-[86px]" />
          <DockTitle>Input Panel</DockTitle>
          <form className="mt-[2px] flex min-h-0 flex-1 flex-col border-t-2 border-[#222] pr-[3px] pb-[3px] pl-[2px]" onSubmit={(e) => e.preventDefault()}>
            <div className="h-[22px] pt-[1px]">FORLOOP</div>
            <input aria-label="Node name" className={field} defaultValue="loopIter" />
            <input aria-label="Node path" className={`mt-[6px] ${field}`} defaultValue="Legendre.loopIter" />
            <div className="mt-[8px] flex items-center justify-between pr-[5px] pl-[3px]">
              <label htmlFor="nsteps">nsteps</label>
              <div className="flex w-[124px]">
                <input id="nsteps" className={`min-w-0 flex-1 ${field}`} defaultValue="0" />
                <div className="flex w-[19px] flex-col border border-l-0 border-[#777] bg-gradient-to-b from-[#f4f4f4] to-[#c9c9c9]">
                  <button type="button" aria-label="Increase" className="flex flex-1 items-end justify-center">
                    <svg viewBox="0 0 12 7" className="h-[7px] w-3" aria-hidden="true"><path d="M6 1l5 5H1z" fill="#444" stroke="#000" /></svg>
                  </button>
                  <button type="button" aria-label="Decrease" className="flex flex-1 items-start justify-center pt-[1px]">
                    <svg viewBox="0 0 12 7" className="h-[7px] w-3" aria-hidden="true"><path d="M6 6l5-5H1z" fill="#999" /></svg>
                  </button>
                </div>
              </div>
            </div>
            <div className="mt-[6px] flex items-center gap-[7px] pr-[3px] pl-[3px]">
              <label htmlFor="index">index:</label>
              <input id="index" className={`min-w-0 flex-1 ${field}`} defaultValue="" />
            </div>
            <div className="mt-auto flex justify-between">
              <button type="submit" className={`w-[75px] ${pushButton}`}>Apply</button>
              <button type="button" className={`px-[6px] ${pushButton}`}>Cancel Edition</button>
            </div>
          </form>
        </aside>
      </div>

      <footer className="h-[20px] shrink-0 border-t border-l border-[#777]">
        <div className="flex h-full items-end justify-end border-b-2 border-white">
          <svg viewBox="0 0 16 16" className="size-4" aria-hidden="true">
            <path d="M2 16L16 2M7 16l9-9M12 16l4-4" stroke="#888" />
            <path d="M3 16L16 3M8 16l8-8M13 16l3-3" stroke="#fff" />
          </svg>
        </div>
      </footer>
    </div>
  );
}
